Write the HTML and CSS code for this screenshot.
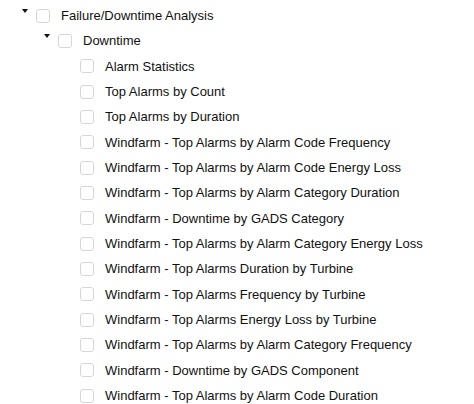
FILE: index.html
```html
<!DOCTYPE html>
<html lang="en">
<head>
    <meta charset="UTF-8">
    <title>Report Tree</title>
    <link rel="stylesheet" href="styles.css">
</head>
<body>
    <ul class="tree">
        <li>
            <div class="row"><span class="toggle open"></span><span class="check"></span><span class="label">Failure/Downtime Analysis</span></div>
            <ul>
                <li>
                    <div class="row"><span class="toggle open"></span><span class="check"></span><span class="label">Downtime</span></div>
                    <ul>
                        <li><div class="row"><span class="toggle"></span><span class="check"></span><span class="label">Alarm Statistics</span></div></li>
                        <li><div class="row"><span class="toggle"></span><span class="check"></span><span class="label">Top Alarms by Count</span></div></li>
                        <li><div class="row"><span class="toggle"></span><span class="check"></span><span class="label">Top Alarms by Duration</span></div></li>
                        <li><div class="row"><span class="toggle"></span><span class="check"></span><span class="label">Windfarm - Top Alarms by Alarm Code Frequency</span></div></li>
                        <li><div class="row"><span class="toggle"></span><span class="check"></span><span class="label">Windfarm - Top Alarms by Alarm Code Energy Loss</span></div></li>
                        <li><div class="row"><span class="toggle"></span><span class="check"></span><span class="label">Windfarm - Top Alarms by Alarm Category Duration</span></div></li>
                        <li><div class="row"><span class="toggle"></span><span class="check"></span><span class="label">Windfarm - Downtime by GADS Category</span></div></li>
                        <li><div class="row"><span class="toggle"></span><span class="check"></span><span class="label">Windfarm - Top Alarms by Alarm Category Energy Loss</span></div></li>
                        <li><div class="row"><span class="toggle"></span><span class="check"></span><span class="label">Windfarm - Top Alarms Duration by Turbine</span></div></li>
                        <li><div class="row"><span class="toggle"></span><span class="check"></span><span class="label">Windfarm - Top Alarms Frequency by Turbine</span></div></li>
                        <li><div class="row"><span class="toggle"></span><span class="check"></span><span class="label">Windfarm - Top Alarms Energy Loss by Turbine</span></div></li>
                        <li><div class="row"><span class="toggle"></span><span class="check"></span><span class="label">Windfarm - Top Alarms by Alarm Category Frequency</span></div></li>
                        <li><div class="row"><span class="toggle"></span><span class="check"></span><span class="label">Windfarm - Downtime by GADS Component</span></div></li>
                        <li><div class="row"><span class="toggle"></span><span class="check"></span><span class="label">Windfarm - Top Alarms by Alarm Code Duration</span></div></li>
                    </ul>
                </li>
            </ul>
        </li>
    </ul>
</body>
</html>
```

FILE: styles.css
```css
body { margin: 0; background: #fff; font-family: "Liberation Sans", Arial, sans-serif; font-size: 13px; color: #111; }
ul { list-style: none; margin: 0; padding: 0; }
.tree { padding: 3px 0 0 22px; }
.tree ul { padding-left: 22px; }
.row { display: flex; align-items: center; height: 25.33px; }
.toggle { width: 14px; height: 14px; flex: none; position: relative; }
.toggle.open::before { content: ""; position: absolute; left: 0; top: 0; border-left: 3px solid transparent; border-right: 3px solid transparent; border-top: 4px solid #111; }
.check { width: 14px; height: 14px; box-sizing: border-box; flex: none; border: 1px solid #d6d6d6; border-radius: 3px; background: #fff; margin-right: 11px; }
.label { white-space: nowrap; }
```
